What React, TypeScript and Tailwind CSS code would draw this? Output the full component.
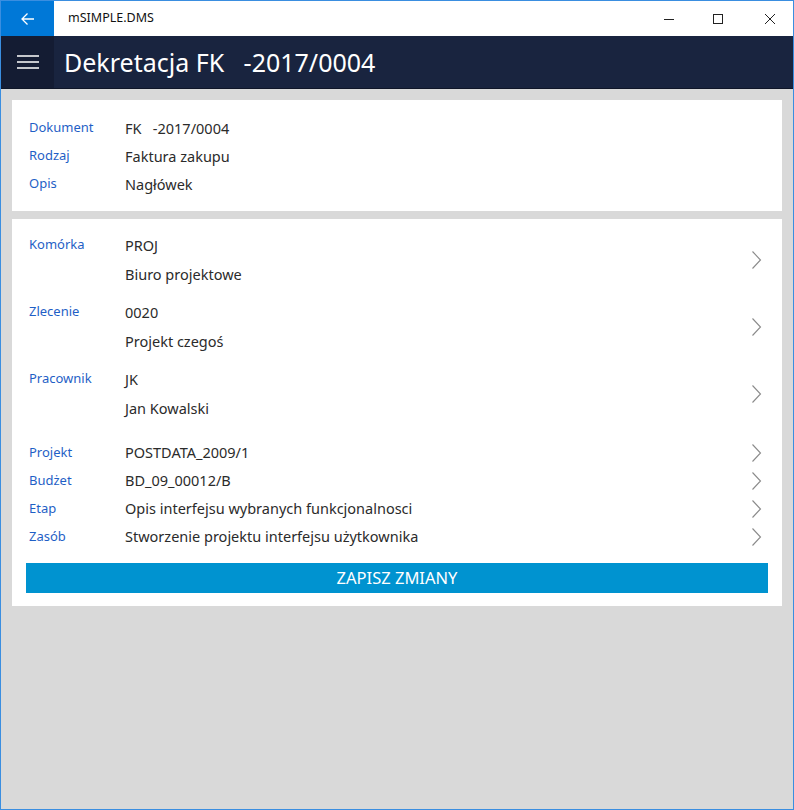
import React from "react";

const font = { fontFamily: '"Noto Sans", "Open Sans", sans-serif' };

function Chevron() {
  return (
    <svg width="12" height="20" viewBox="0 0 12 20" className="shrink-0">
      <path d="M2.5 1.5 L10.5 10 L2.5 18.5" fill="none" stroke="#8a8a8a" strokeWidth="1.1" />
    </svg>
  );
}

function InfoRow({ label, value }: { label: string; value: string }) {
  return (
    <div className="flex h-[28px] items-center">
      <div className="w-[96px] text-[13px] text-[#1f5fc6] -mt-[1px]">{label}</div>
      <div className="text-[14.5px] text-[#2b2b2b] whitespace-pre mt-[1px]">{value}</div>
    </div>
  );
}

function GroupRow({ label, code, name }: { label: string; code: string; name: string }) {
  return (
    <div className="flex h-[67px]">
      <div className="flex-1 flex">
        <div className="w-[96px] h-[29px] flex items-center text-[13px] text-[#1f5fc6] -mt-[1px]">{label}</div>
        <div className="flex flex-col text-[14.5px] text-[#2b2b2b]">
          <div className="h-[29px] flex items-center">{code}</div>
          <div className="h-[29px] flex items-center">{name}</div>
        </div>
      </div>
      <div className="h-[58px] flex items-center pr-[1px]">
        <Chevron />
      </div>
    </div>
  );
}

function LinkRow({ label, value }: { label: string; value: string }) {
  return (
    <div className="flex h-[28px] items-center">
      <div className="w-[96px] text-[13px] text-[#1f5fc6] -mt-[1px]">{label}</div>
      <div className="flex-1 text-[14.5px] text-[#2b2b2b]">{value}</div>
      <div className="pr-[1px]">
        <Chevron />
      </div>
    </div>
  );
}

export default function App() {
  return (
    <div
      className="w-[794px] h-[810px] border border-[#3a8ee0] bg-[#d9d9d9] flex flex-col overflow-hidden"
      style={font}
    >
      {/* window title bar */}
      <div className="h-[35px] bg-white flex items-stretch shrink-0">
        <div className="w-[53px] bg-[#0078d7] flex items-center justify-center">
          <svg width="16" height="14" viewBox="0 0 16 14">
            <path d="M14 7 H2 M7.5 1.5 L2 7 L7.5 12.5" fill="none" stroke="#fff" strokeWidth="1.3" />
          </svg>
        </div>
        <div className="pl-[14px] flex items-center text-[12.5px] text-[#111]">mSIMPLE.DMS</div>
        <div className="flex-1" />
        <div className="w-[46px] flex items-center justify-center">
          <svg width="12" height="12" viewBox="0 0 12 12">
            <path d="M1 6.5 H11" stroke="#222" strokeWidth="1" />
          </svg>
        </div>
        <div className="w-[46px] flex items-center justify-center ml-[3px]">
          <svg width="12" height="12" viewBox="0 0 12 12">
            <rect x="1.5" y="1.5" width="9" height="9" fill="none" stroke="#222" strokeWidth="1" />
          </svg>
        </div>
        <div className="w-[46px] flex items-center justify-center ml-[6px]">
          <svg width="12" height="12" viewBox="0 0 12 12">
            <path d="M1 1 L11 11 M11 1 L1 11" stroke="#222" strokeWidth="1" />
          </svg>
        </div>
      </div>

      {/* app header */}
      <div className="h-[53px] bg-[#19243f] flex items-stretch shrink-0 border-b border-[#0f1628]">
        <div className="w-[53px] bg-[#141c33] flex items-center justify-center">
          <svg width="22" height="16" viewBox="0 0 22 16">
            <path d="M0 2 H22 M0 8 H22 M0 14 H22" stroke="#fff" strokeWidth="1.5" />
          </svg>
        </div>
        <div className="pl-[10px] flex items-center text-[25px] text-white whitespace-pre pt-[2px]">
          Dekretacja FK   -2017/0004
        </div>
      </div>

      <div className="px-[11px] pt-[11px] flex flex-col gap-[8px]">
        {/* document header card */}
        <div className="bg-white pl-[17px] pt-[14px] pb-[13px]">
          <InfoRow label="Dokument" value="FK   -2017/0004" />
          <InfoRow label="Rodzaj" value="Faktura zakupu" />
          <InfoRow label="Opis" value="Nagłówek" />
        </div>

        {/* allocation card */}
        <div className="bg-white px-[14px] pt-[12px] pb-[13px] flex flex-col">
          <div className="pl-[3px] pr-[5px] flex flex-col">
            <GroupRow label="Komórka" code="PROJ" name="Biuro projektowe" />
            <GroupRow label="Zlecenie" code="0020" name="Projekt czegoś" />
            <GroupRow label="Pracownik" code="JK" name="Jan Kowalski" />
            <div className="mt-[7px] flex flex-col">
              <LinkRow label="Projekt" value="POSTDATA_2009/1" />
              <LinkRow label="Budżet" value="BD_09_00012/B" />
              <LinkRow label="Etap" value="Opis interfejsu wybranych funkcjonalnosci" />
              <LinkRow label="Zasób" value="Stworzenie projektu interfejsu użytkownika" />
            </div>
          </div>
          <button className="mt-[12px] h-[30px] bg-[#0093d0] text-white text-[16.5px] flex items-center justify-center">
            ZAPISZ ZMIANY
          </button>
        </div>
      </div>
    </div>
  );
}
